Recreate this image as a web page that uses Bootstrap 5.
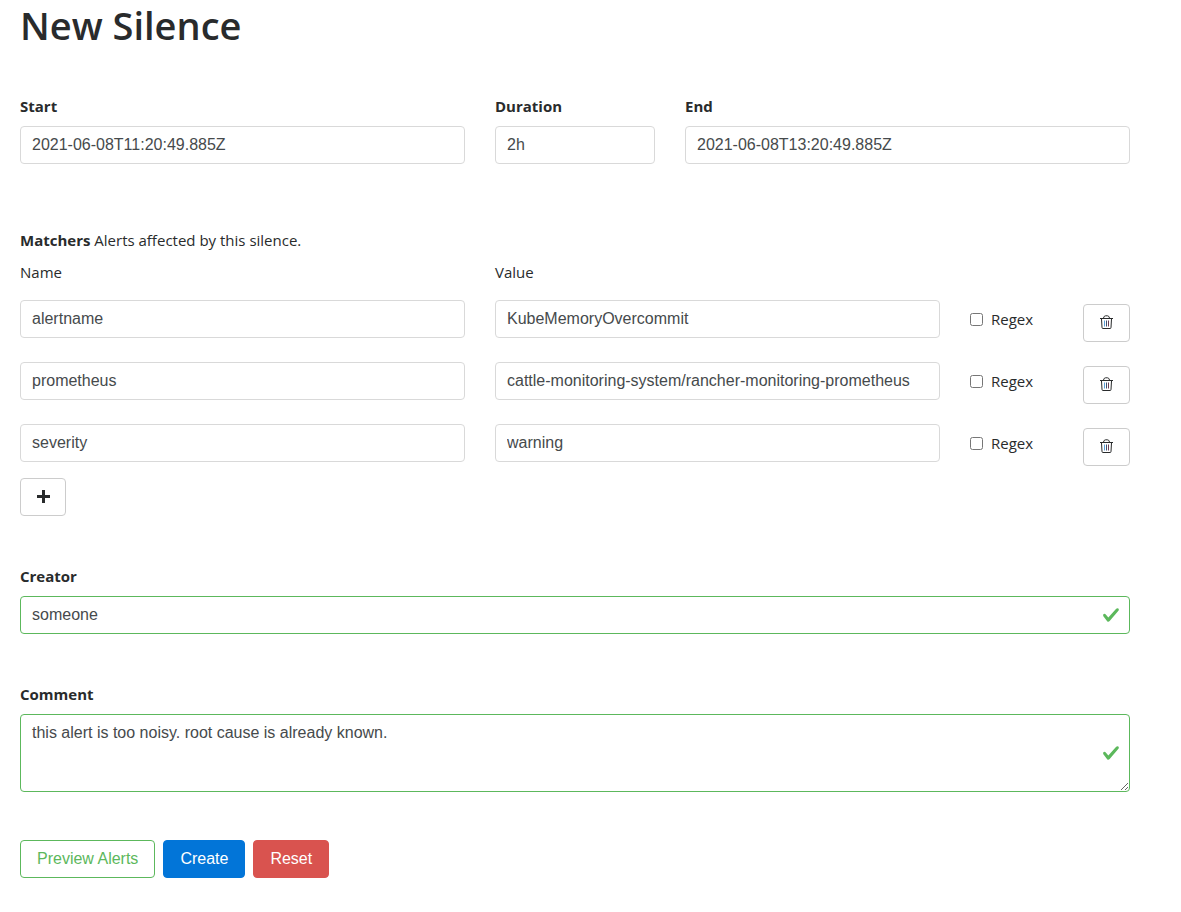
<!DOCTYPE html>
<html lang="en">
<head>
<meta charset="utf-8">
<meta name="viewport" content="width=device-width, initial-scale=1">
<title>New Silence</title>
<link href="https://cdn.jsdelivr.net/npm/bootstrap@5.3.0/dist/css/bootstrap.min.css" rel="stylesheet">
<style>
  body { font-family: "Open Sans", "Noto Sans", sans-serif; font-size: 15px; line-height: 24px; color: #292b2c; }
  .silence-page { max-width: 1140px; margin-left: 5px; padding: 2px 15px 32px; }
  .silence-page .row { --bs-gutter-x: 30px; }
  h1 { font-size: 38px; line-height: 46px; font-weight: 600; }
  .silence-form { margin-top: 46px; }
  .form-label { font-weight: 700; margin-bottom: 8px; }
  .form-control, .btn { font-family: "Liberation Sans", Arial, sans-serif; font-size: 16px; line-height: 24px; border-radius: 4px; }
  .form-control, .form-control:focus { color: #464a4c; border-color: #d9d9d9; }
  .form-control { padding: 6px 11px; }
  .form-control.is-valid, .form-control.is-valid:focus, textarea.form-control.is-valid {
    border-color: #5cb85c; padding-right: 36px;
    background: #fff url("data:image/svg+xml,%3Csvg xmlns='http://www.w3.org/2000/svg' viewBox='0 0 8 8'%3E%3Cpath fill='%235cb85c' d='M2.3 6.73L.6 4.53c-.4-1.04.46-1.4 1.1-.8l1.1 1.4 3.4-3.8c.6-.63 1.6-.27 1.2.7l-4 4.6c-.43.5-.8.4-1.1.1z'/%3E%3C/svg%3E") no-repeat center right 9px / 18px 18px;
  }
  textarea.form-control { height: 78px; }
  .btn { padding: 6px 16px; }
  .btn-icon { width: 47px; height: 38px; padding: 0 0 3px; border-color: #ccc; color: #292b2c; }
  .btn-add { width: 46px; }
  .btn-preview { color: #5cb85c; border-color: #5cb85c; background: #fff; }
  .btn-create { color: #fff; background: #0275d8; border-color: #0275d8; }
  .btn-reset { color: #fff; background: #d9534f; border-color: #d9534f; }
  .field-block { margin-bottom: 48px; }
  .period-block { margin-bottom: 64px; }
  .matcher-row { margin-bottom: 20px; }
  .matcher-row:last-of-type { margin-bottom: 12px; }
  .matcher-row .btn-icon { margin-top: 4px; }
  .regex-check { height: 38px; gap: 8px; }
  .regex-check input { width: 13px; height: 13px; margin: 0; }
</style>
</head>
<body>
<svg class="d-none" aria-hidden="true">
  <symbol id="trash" viewBox="0 0 13 14"><g fill="none" stroke="currentColor"><path d="M0 3.500h13M3.500 3Q4 .8 5.500.8h2Q9 .8 9.500 3"/><path d="M1.500 4l.5 8.500q0 1 1 1h7q1 0 1-1l.5-8.500"/><path d="M4.500 5.500v6" stroke="#5aa0d8"/><path d="M6.500 5.500v6" stroke="#3f4f70"/><path d="M8.500 5.500v6" stroke="#6b3f55"/></g></symbol>
</svg>
<main class="silence-page">
  <h1 class="mb-0">New Silence</h1>
  <form class="silence-form" onsubmit="return false">
    <div class="row period-block">
      <div class="col-5"><label class="form-label" for="start">Start</label><input class="form-control" id="start" type="text" value="2021-06-08T11:20:49.885Z"></div>
      <div class="col-2"><label class="form-label" for="duration">Duration</label><input class="form-control" id="duration" type="text" value="2h"></div>
      <div class="col-5"><label class="form-label" for="end">End</label><input class="form-control" id="end" type="text" value="2021-06-08T13:20:49.885Z"></div>
    </div>

    <section class="field-block">
      <div class="mb-2"><strong>Matchers</strong> Alerts affected by this silence.</div>
      <div class="row mb-3">
        <div class="col-5">Name</div>
        <div class="col-5">Value</div>
      </div>
      <div class="row matcher-row">
        <div class="col-5"><input class="form-control" type="text" aria-label="Name" value="alertname"></div>
        <div class="col-5"><input class="form-control" type="text" aria-label="Value" value="KubeMemoryOvercommit"></div>
        <div class="col-2 d-flex justify-content-between">
          <label class="regex-check d-flex align-items-center"><input type="checkbox">Regex</label>
          <button class="btn btn-icon" type="button" aria-label="Delete matcher"><svg width="13" height="14"><use href="#trash"/></svg></button>
        </div>
      </div>
      <div class="row matcher-row">
        <div class="col-5"><input class="form-control" type="text" aria-label="Name" value="prometheus"></div>
        <div class="col-5"><input class="form-control" type="text" aria-label="Value" value="cattle-monitoring-system/rancher-monitoring-prometheus"></div>
        <div class="col-2 d-flex justify-content-between">
          <label class="regex-check d-flex align-items-center"><input type="checkbox">Regex</label>
          <button class="btn btn-icon" type="button" aria-label="Delete matcher"><svg width="13" height="14"><use href="#trash"/></svg></button>
        </div>
      </div>
      <div class="row matcher-row">
        <div class="col-5"><input class="form-control" type="text" aria-label="Name" value="severity"></div>
        <div class="col-5"><input class="form-control" type="text" aria-label="Value" value="warning"></div>
        <div class="col-2 d-flex justify-content-between">
          <label class="regex-check d-flex align-items-center"><input type="checkbox">Regex</label>
          <button class="btn btn-icon" type="button" aria-label="Delete matcher"><svg width="13" height="14"><use href="#trash"/></svg></button>
        </div>
      </div>
      <button class="btn btn-icon btn-add d-block" type="button" aria-label="Add matcher"><svg width="13" height="13" viewBox="0 0 13 13"><path fill="currentColor" d="M5 0h3v5h5v3H8v5H5V8H0V5h5z"/></svg></button>
    </section>

    <div class="field-block">
      <label class="form-label" for="creator">Creator</label>
      <input class="form-control is-valid" id="creator" type="text" value="someone">
    </div>
    <div class="field-block">
      <label class="form-label" for="comment">Comment</label>
      <textarea class="form-control is-valid" id="comment">this alert is too noisy. root cause is already known.</textarea>
    </div>
    <div class="d-flex gap-2">
      <button class="btn btn-preview" type="button">Preview Alerts</button>
      <button class="btn btn-create" type="submit">Create</button>
      <button class="btn btn-reset" type="reset">Reset</button>
    </div>
  </form>
</main>
<script src="https://cdn.jsdelivr.net/npm/bootstrap@5.3.0/dist/js/bootstrap.bundle.min.js"></script>
</body>
</html>
